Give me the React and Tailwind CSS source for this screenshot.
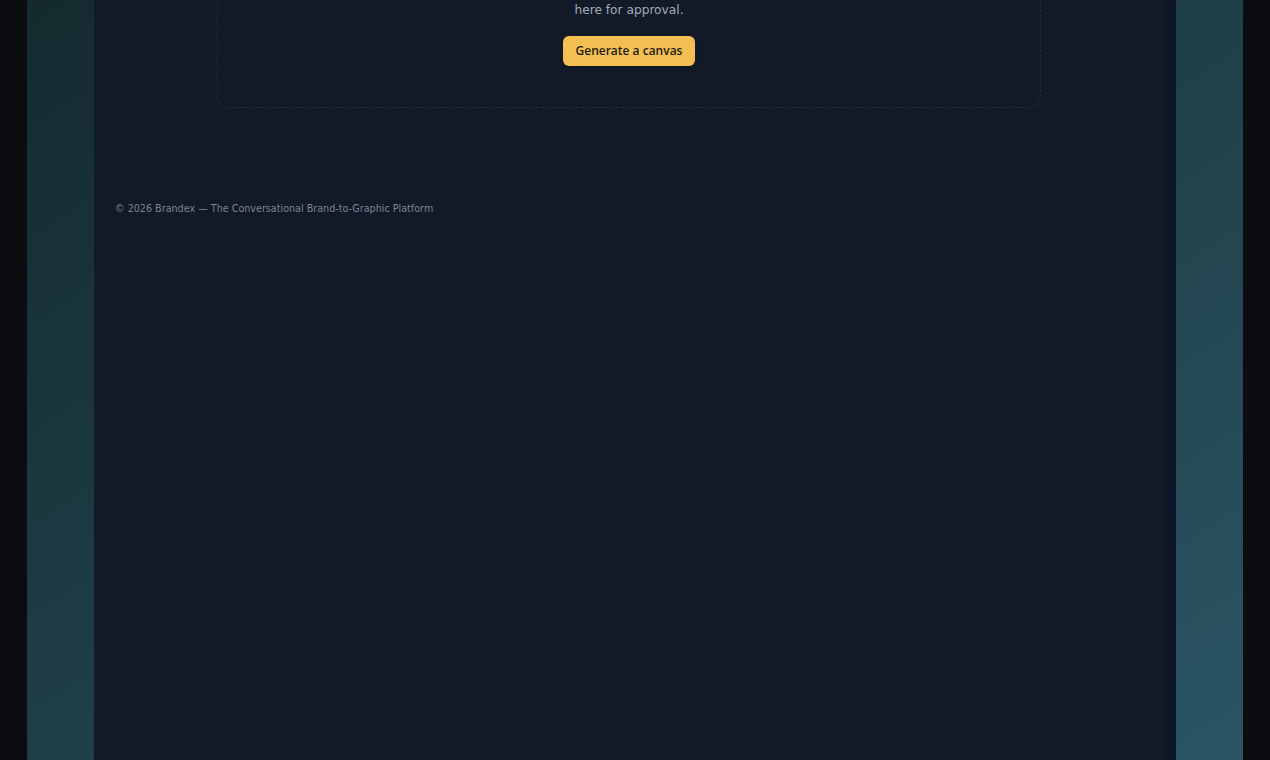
export default function App() {
  return (
    <div className="flex h-screen w-full overflow-hidden bg-[#0b0d11] px-[27px] font-['DejaVu_Sans',sans-serif]">
      {/* Teal backdrop */}
      <div className="flex flex-1 bg-gradient-to-br from-[#142a2f] via-[#1f3f48] to-[#2b5564] px-[67px]">
        {/* Main panel */}
        <div className="flex flex-1 bg-[#131a27]">
          <div className="flex flex-1 flex-col">
            {/* Empty canvas card (scrolled) */}
            <div className="-mt-[40px] px-[123px]">
              <div className="mx-auto flex max-w-[824px] flex-col items-center rounded-xl border border-dashed border-[#222d3d] bg-[#121a27] px-6 pb-[41px] pt-[39px]">
                <p className="text-center text-[12.2px] leading-5 text-[#a3abb8]">
                  here for approval.
                </p>
                <button className="mt-4 h-[30px] w-[132px] rounded-md bg-[#f4bf52] font-['Open_Sans',sans-serif] text-[12px] font-semibold text-[#1f1c14] shadow-sm">
                  Generate a canvas
                </button>
              </div>
            </div>

            {/* Footer */}
            <footer className="mt-[94px] border-b border-[#151d2a] px-[21px] pb-[50px]">
              <p className="text-[9.6px] leading-[14px] text-[#7a8393]">
                © 2026 Brandex — The Conversational Brand-to-Graphic Platform
              </p>
            </footer>
            <div className="flex-1 bg-[#131a28]" />
          </div>
          <div className="w-[12px] bg-[#0d1626]" />
        </div>
      </div>
    </div>
  )
}
